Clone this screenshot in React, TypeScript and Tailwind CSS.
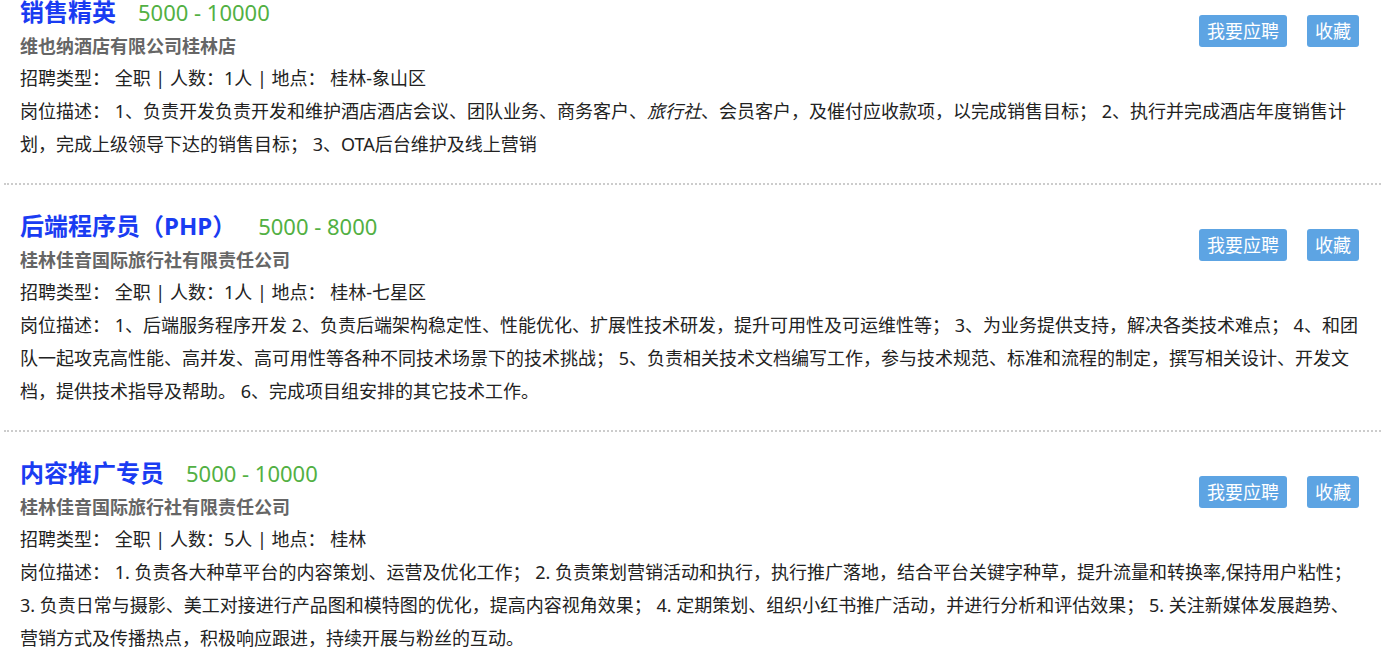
import React from 'react';

interface Job {
  title: string;
  salary: string;
  company: string;
  count: string;
  place: string;
  desc: React.ReactNode;
}

const jobs: Job[] = [
  {
    title: '销售精英',
    salary: '5000 - 10000',
    company: '维也纳酒店有限公司桂林店',
    count: '1',
    place: '桂林-象山区',
    desc: (
      <>
        1、负责开发负责开发和维护酒店酒店会议、团队业务、商务客户、<em className="italic">旅行社</em>
        、会员客户，及催付应收款项，以完成销售目标； 2、执行并完成酒店年度销售计划，完成上级领导下达的销售目标； 3、OTA后台维护及线上营销
      </>
    ),
  },
  {
    title: '后端程序员（PHP）',
    salary: '5000 - 8000',
    company: '桂林佳音国际旅行社有限责任公司',
    count: '1',
    place: '桂林-七星区',
    desc: '1、后端服务程序开发 2、负责后端架构稳定性、性能优化、扩展性技术研发，提升可用性及可运维性等； 3、为业务提供支持，解决各类技术难点； 4、和团队一起攻克高性能、高并发、高可用性等各种不同技术场景下的技术挑战； 5、负责相关技术文档编写工作，参与技术规范、标准和流程的制定，撰写相关设计、开发文档，提供技术指导及帮助。 6、完成项目组安排的其它技术工作。',
  },
  {
    title: '内容推广专员',
    salary: '5000 - 10000',
    company: '桂林佳音国际旅行社有限责任公司',
    count: '5',
    place: '桂林',
    desc: '1. 负责各大种草平台的内容策划、运营及优化工作； 2. 负责策划营销活动和执行，执行推广落地，结合平台关键字种草，提升流量和转换率,保持用户粘性； 3. 负责日常与摄影、美工对接进行产品图和模特图的优化，提高内容视角效果； 4. 定期策划、组织小红书推广活动，并进行分析和评估效果； 5. 关注新媒体发展趋势、营销方式及传播热点，积极响应跟进，持续开展与粉丝的互动。',
  },
];

function JobCard({ job }: { job: Job }) {
  return (
    <div className="ml-[4px] w-[1377px] pl-4 pr-[19px] pt-[23px] pb-[22px] border-b-2 border-dotted border-[#cccccc]">
      <div className="float-right mt-[21px] mr-[3px] flex gap-5">
        <button className="h-8 px-2 rounded-[3px] bg-[#5da4e3] text-white text-[18px] leading-8">
          我要应聘
        </button>
        <button className="h-8 px-2 rounded-[3px] bg-[#5da4e3] text-white text-[18px] leading-8">
          收藏
        </button>
      </div>
      <div className="h-9 flex items-center">
        <span className="text-[24px] font-bold text-[#1a3cf2] leading-9">{job.title}</span>
        <span className="ml-[22px] text-[22px] text-[#52b043] leading-9">{job.salary}</span>
      </div>
      <div className="text-[18px] font-bold text-[#666] leading-8">{job.company}</div>
      <div className="text-[18px] text-[#222] leading-[33px]">
        {`招聘类型： 全职 | 人数：${job.count}人 | 地点： ${job.place}`}
      </div>
      <div className="text-[18px] text-[#222] leading-[33px]">
        岗位描述： {job.desc}
      </div>
    </div>
  );
}

export default function App() {
  return (
    <div
      lang="zh-CN"
      className="bg-white min-h-screen overflow-hidden"
      style={{ fontFamily: '"Noto Sans", "Noto Sans CJK SC", sans-serif' }}
    >
      <div className="-mt-[29px]">
        {jobs.map((job, i) => (
          <JobCard key={i} job={job} />
        ))}
      </div>
    </div>
  );
}
